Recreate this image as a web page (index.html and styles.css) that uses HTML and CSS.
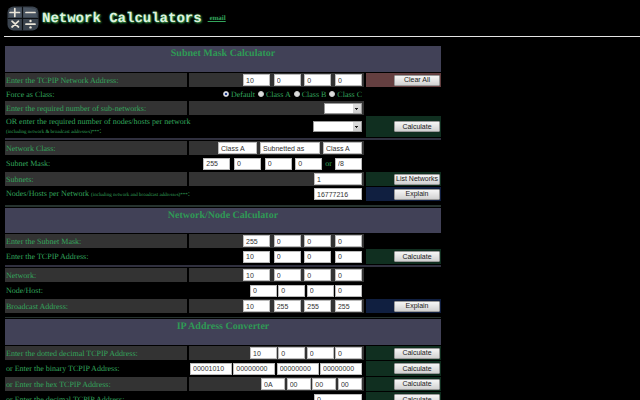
FILE: index.html
```html
<!DOCTYPE html>
<html lang="en">
<head>
    <meta charset="UTF-8">
    <meta name="viewport" content="width=device-width, initial-scale=1.0">
    <title>Network Calculators</title>
    <link rel="stylesheet" href="styles.css">
</head>
<body>

<header>
    <svg class="logo" viewBox="0 0 32 26" aria-hidden="true">
        <rect x="0.5" y="0.5" width="31" height="24" rx="6" fill="#3a434e"/>
        <path d="M3 3 Q16 0 29 3 L30 11 H2 Z" fill="#4a5562"/>
        <path d="M15.5 0.5 V24.5 M0.5 12.5 H31.5" stroke="#0b0e12" stroke-width="1.2"/>
        <g stroke="#e9e4d8" stroke-width="1.7" stroke-linecap="round" fill="none">
            <path d="M3 6.5 H12.5 M7.8 2.5 V10.5"/>
            <path d="M19 6.5 H28"/>
            <path d="M5 15.2 L11.5 21 M11.5 15.2 L5 21"/>
            <path d="M19 18.2 H28"/>
        </g>
        <circle cx="23.5" cy="15" r="1.2" fill="#e9e4d8"/>
        <circle cx="23.5" cy="21.4" r="1.2" fill="#e9e4d8"/>
    </svg>
    <h1>Network Calculators</h1>
    <a class="email" href="#">&nbsp;email</a>
</header>

<form>
<table>
    <colgroup>
        <col class="col-label">
        <col class="col-value">
        <col class="col-action">
    </colgroup>

    <!-- Subnet Mask Calculator -->
    <tbody>
        <tr><th colspan="3">Subnet Mask Calculator</th></tr>
        <tr class="shaded">
            <td><label for="ip1">Enter the TCPIP Network Address:</label></td>
            <td><div class="fields"><div class="quad"><input id="ip1" value="10"><input aria-label="Octet 2" value="0"><input aria-label="Octet 3" value="0"><input aria-label="Octet 4" value="0"></div></div></td>
            <td class="red"><button type="button">Clear All</button></td>
        </tr>
        <tr class="short">
            <td>Force as Class:</td>
            <td>
                <div class="fields radios">
                    <label><input type="radio" name="cls" checked>Default</label>
                    <label><input type="radio" name="cls">Class A</label>
                    <label><input type="radio" name="cls">Class B</label>
                    <label><input type="radio" name="cls">Class C</label>
                </div>
            </td>
            <td></td>
        </tr>
        <tr class="shaded">
            <td><label for="subs">Enter the required number of sub-networks:</label></td>
            <td><div class="fields"><select id="subs" class="narrow"><option></option></select></div></td>
            <td></td>
        </tr>
        <tr class="tall">
            <td><label for="hosts">OR enter the required number of nodes/hosts per network<br><small>(including network &amp; broadcast addresses)***</small>:</label></td>
            <td><div class="fields"><select id="hosts"><option></option></select></div></td>
            <td class="green"><button type="button">Calculate</button></td>
        </tr>
        <tr class="line"><td colspan="3"></td></tr>
        <tr class="shaded">
            <td><label for="nclass">Network Class:</label></td>
            <td><div class="fields spaced"><input id="nclass" class="class" value="Class A"><input aria-label="Subnetted" class="wide" value="Subnetted as"><input aria-label="Subnet class" class="class" value="Class A"></div></td>
            <td></td>
        </tr>
        <tr>
            <td><label for="mask1">Subnet Mask:</label></td>
            <td><div class="fields spaced"><div class="quad"><input id="mask1" value="255"><input aria-label="Mask octet 2" value="0"><input aria-label="Mask octet 3" value="0"><input aria-label="Mask octet 4" value="0"></div><label for="bits">or</label><input id="bits" value="/8"></div></td>
            <td></td>
        </tr>
        <tr class="shaded">
            <td><label for="subnets">Subnets:</label></td>
            <td><div class="fields"><input id="subnets" class="number" value="1"></div></td>
            <td class="green"><button type="button">List Networks</button></td>
        </tr>
        <tr class="even">
            <td><label for="nodes">Nodes/Hosts per Network <small>(including network and broadcast addresses)***</small>:</label></td>
            <td><div class="fields"><input id="nodes" class="number" value="16777216"></div></td>
            <td class="blue"><button type="button">Explain</button></td>
        </tr>
        <tr class="gap"><td colspan="3"></td></tr>
        <tr class="line teal"><td colspan="3"></td></tr>
    </tbody>

    <!-- Network/Node Calculator -->
    <tbody>
        <tr><th colspan="3">Network/Node Calculator</th></tr>
        <tr class="shaded">
            <td><label for="nmask1">Enter the Subnet Mask:</label></td>
            <td><div class="fields"><div class="quad"><input id="nmask1" value="255"><input aria-label="Octet 2" value="0"><input aria-label="Octet 3" value="0"><input aria-label="Octet 4" value="0"></div></div></td>
            <td></td>
        </tr>
        <tr>
            <td><label for="nip1">Enter the TCPIP Address:</label></td>
            <td><div class="fields"><div class="quad"><input id="nip1" value="10"><input aria-label="Octet 2" value="0"><input aria-label="Octet 3" value="0"><input aria-label="Octet 4" value="0"></div></div></td>
            <td class="green"><button type="button">Calculate</button></td>
        </tr>
        <tr class="line"><td colspan="3"></td></tr>
        <tr class="shaded">
            <td><label for="net1">Network:</label></td>
            <td><div class="fields"><div class="quad"><input id="net1" value="10"><input aria-label="Octet 2" value="0"><input aria-label="Octet 3" value="0"><input aria-label="Octet 4" value="0"></div></div></td>
            <td></td>
        </tr>
        <tr>
            <td><label for="node1">Node/Host:</label></td>
            <td><div class="fields"><div class="quad tight"><input id="node1" value="0"><input aria-label="Octet 2" value="0"><input aria-label="Octet 3" value="0"><input aria-label="Octet 4" value="0"></div></div></td>
            <td></td>
        </tr>
        <tr class="shaded">
            <td><label for="bc1">Broadcast Address:</label></td>
            <td><div class="fields"><div class="quad"><input id="bc1" value="10"><input aria-label="Octet 2" value="255"><input aria-label="Octet 3" value="255"><input aria-label="Octet 4" value="255"></div></div></td>
            <td class="blue"><button type="button">Explain</button></td>
        </tr>
        <tr class="gap"><td colspan="3"></td></tr>
        <tr class="line teal thin"><td colspan="3"></td></tr>
    </tbody>

    <!-- IP Address Converter -->
    <tbody>
        <tr><th colspan="3">IP Address Converter</th></tr>
        <tr class="shaded">
            <td><label for="dec1">Enter the dotted decimal TCPIP Address:</label></td>
            <td><div class="fields"><div class="quad tight"><input id="dec1" value="10"><input aria-label="Octet 2" value="0"><input aria-label="Octet 3" value="0"><input aria-label="Octet 4" value="0"></div></div></td>
            <td class="green"><button type="button">Calculate</button></td>
        </tr>
        <tr>
            <td><label for="bin1">or Enter the binary TCPIP Address:</label></td>
            <td><div class="fields"><div class="quad binary"><input id="bin1" value="00001010"><input aria-label="Octet 2" value="00000000"><input aria-label="Octet 3" value="00000000"><input aria-label="Octet 4" value="00000000"></div></div></td>
            <td class="green"><button type="button">Calculate</button></td>
        </tr>
        <tr class="shaded">
            <td><label for="hex1">or Enter the hex TCPIP Address:</label></td>
            <td><div class="fields"><div class="quad hex"><input id="hex1" value="0A"><input aria-label="Octet 2" value="00"><input aria-label="Octet 3" value="00"><input aria-label="Octet 4" value="00"></div></div></td>
            <td class="green"><button type="button">Calculate</button></td>
        </tr>
        <tr>
            <td><label for="decimal">or Enter the decimal TCPIP Address:</label></td>
            <td><div class="fields"><input id="decimal" class="number" value="0"></div></td>
            <td class="green"><button type="button">Calculate</button></td>
        </tr>
    </tbody>
</table>
</form>

</body>
</html>
```

FILE: styles.css
```css
* {
    box-sizing: border-box;
}
body {
    margin: 0;
    padding-left: 3px;
    background: #000;
    color: #33a55c;
    font-family: "Liberation Serif", "Times New Roman", serif;
    font-size: 8px;
    line-height: 9px;
    text-rendering: geometricPrecision;
}

/* Header */
header {
    display: flex;
    align-items: center;
    height: 37px;
    margin-bottom: 8px;
    margin-left: 1px;
    padding-top: 1px;
    padding-left: 3px;
    border-bottom: 1px solid #e4e4e4;
}
.logo {
    width: 32px;
    height: 26px;
}
h1 {
    margin: 0 6px 0 3px;
    color: #e0f2e0;
    font-family: "Liberation Mono", "Courier New", monospace;
    font-size: 14px;
    line-height: 16px;
    text-shadow: 0 0 2px #2f9a45, 1px 1px 2px #2f9a45;
}
.email {
    color: #33a55c;
    font-size: 7px;
    font-weight: bold;
}

/* Table */
table {
    width: 440px;
    table-layout: fixed;
    border-spacing: 2px 1px;
}
.col-label { width: 182px; }
.col-value { width: 175px; }
tr { height: 15px; }
td {
    padding: 0 1px;
    vertical-align: middle;
    white-space: nowrap;
}
th {
    height: 26px;
    padding: 3px 0 0;
    background: #414157;
    color: #2f9a55;
    font-size: 10px;
    line-height: 10px;
    vertical-align: top;
}
tbody + tbody th { height: 25px; }
tbody:last-child th { height: 26px; }
.shaded, .even { height: 14px; }
.short { height: 12px; }
.tall { height: 21px; }
.shaded td:not(:last-child) { background: #333; }
small { font-size: 5px; }
.line { height: 2px; }
.line td { background: #30303f; }
.teal td { background: #26332f; }
.gap { height: 2px; }
.thin { height: 1px; }
.line td, .gap td { padding: 0; }
td.red { background: #643f40; }
td.green { background: #102f20; }
td.blue { background: #101f40; }

/* Form controls */
.fields {
    display: flex;
    justify-content: flex-end;
    align-items: center;
    padding-right: 1px;
}
.spaced { gap: 3px; }
.quad {
    display: flex;
    justify-content: space-between;
    width: 119px;
}
.tight { width: 112px; }
.binary { width: 172px; }
.hex { width: 101px; }
input, select, button {
    margin: 0;
    font-family: "Liberation Sans", Arial, sans-serif;
    font-size: 7px;
    line-height: 8px;
}
input {
    width: 27px;
    height: 12px;
    padding: 0 2px;
    border: 1px solid #bbb;
    background: #fff;
    color: #333;
}
.binary input { width: 42px; }
.hex input { width: 24px; }
.class { width: 39px; }
.wide { width: 60px; }
.number { width: 48px; }
.radios { gap: 3px; }
.radios label {
    display: flex;
    align-items: center;
    gap: 2px;
}
.radios input {
    appearance: none;
    width: 6px;
    height: 6px;
    padding: 0;
    border-color: #ccc;
    border-radius: 50%;
    background: #ddd;
}
.radios input:checked {
    background: radial-gradient(#1c3a8a 40%, #fff 60%);
}
select {
    appearance: none;
    width: 49px;
    height: 11px;
    border: 1px solid #999;
    border-radius: 0;
    background:
        linear-gradient(#222, #222) right 3px top 4px / 3px 1px no-repeat,
        linear-gradient(#222, #222) right 4px top 5px / 1px 1px no-repeat,
        linear-gradient(#ddd, #ccc) right / 8px 100% no-repeat,
        #fff;
}
.narrow { width: 38px; }
button {
    display: block;
    width: 46px;
    height: 11px;
    margin-left: auto;
    padding: 0;
    border: 1px solid #999;
    border-radius: 1px;
    background: linear-gradient(#f6f6f6, #d2d2d2);
    color: #222;
    white-space: nowrap;
}
```
